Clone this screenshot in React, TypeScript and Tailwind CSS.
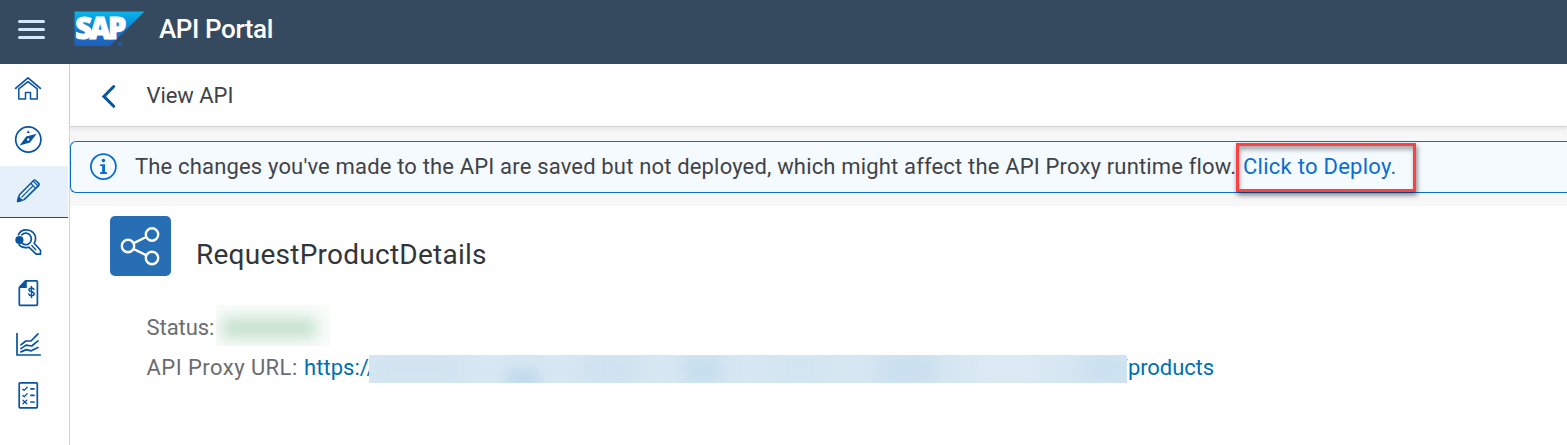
import type { ReactNode } from 'react';

const text = "font-['Roboto',sans-serif] whitespace-pre leading-none";

function Icon({ children }: { children: ReactNode }) {
  return (
    <svg
      width="28"
      height="28"
      viewBox="0 0 28 28"
      fill="none"
      stroke="#0854a0"
      strokeWidth="1.7"
      strokeLinecap="round"
      strokeLinejoin="round"
    >
      {children}
    </svg>
  );
}

function NavItem({ children, active = false }: { children: ReactNode; active?: boolean }) {
  return (
    <a
      className={
        active
          ? 'flex h-[52px] w-[68px] shrink-0 items-start border-b border-[#0854a0] bg-[#e5f0fa] pt-[10px] pl-[14px]'
          : 'flex h-[51px] w-[68px] shrink-0 items-start pt-[10px] pl-[14px]'
      }
    >
      {children}
    </a>
  );
}

function SapLogo() {
  return (
    <svg width="71" height="36" viewBox="0 0 71 36" className="shrink-0 overflow-visible">
      <defs>
        <linearGradient id="sap" x1="0" y1="0" x2="0" y2="1">
          <stop offset="0" stopColor="#08b4ea" />
          <stop offset="0.3" stopColor="#0d94dc" />
          <stop offset="0.65" stopColor="#1870c8" />
          <stop offset="1" stopColor="#1e5fbb" />
        </linearGradient>
      </defs>
      <path d="M0.5 0.5H70.5L36 35H0.5Z" fill="url(#sap)" />
      <text
        x="1.2"
        y="28.3"
        letterSpacing="-2.6"
        textLength="48.5"
        lengthAdjust="spacingAndGlyphs"
        fontFamily="Open Sans"
        fontWeight="800"
        fontSize="29.5"
        fill="#fff"
        stroke="#fff"
        strokeWidth="1"
      >
        SAP
      </text>
      <circle cx="46" cy="32.7" r="2.2" fill="#1f5b9f" />
    </svg>
  );
}

function Sidebar() {
  return (
    <nav className="flex w-[70px] shrink-0 flex-col border-r border-[#d5d5d5] bg-white">
      <NavItem>
        <Icon>
          <path d="M1.6 14.4 14 3.8l12.4 10.6" />
          <path d="M4.8 14.8V24.9H11.5V18.4H16.5V24.9H23.2V14.8L14 7.6Z" strokeWidth="1.5" />
        </Icon>
      </NavItem>
      <NavItem>
        <Icon>
          <circle cx="14.3" cy="14.5" r="12.6" />
          <path d="M5.6 20.4 12.2 11.6 22.7 8.8 16 17.6Z" fill="#0854a0" stroke="none" />
          <circle cx="14.2" cy="14.5" r="1.2" fill="#fff" stroke="none" />
          <path d="M12.5 8 14.2 5.4l1.7 2.6Z" fill="#0854a0" stroke="none" />
        </Icon>
      </NavItem>
      <NavItem active>
        <Icon>
          <path d="M3.6 25.4 5.4 18.8 19.6 4.5q1-1 2 0L24.7 7.4q1 1 0 2L10.2 23.6Z" strokeWidth="1.5" />
          <path d="M16.8 7.4l4.9 4.9M19.2 5.1l4.9 4.9M7.8 21.2 18.9 9.9" strokeWidth="1.2" />
          <path d="M3.6 25.4l1-4 3 3Z" fill="#0854a0" />
        </Icon>
      </NavItem>
      <NavItem>
        <Icon>
          <path d="M4.5 6.6C6 3.2 9 1.8 12.3 1.8c5.5 0 9.3 4.1 9.3 8.8 0 1.8-.5 3.3-1.4 4.7l6.3 7v3.9h-4.3l-7.4-7c-3.8 1.1-7.4.1-9.7-2.5" />
          <path d="M7.8 6.8c2.5-2.4 6.3-2.1 8.3.5s1.5 6.1-.8 8-5.2 1.5-7.2 0" />
          <path d="M17.8 17.6 21.7 21.7" strokeWidth="1.4" />
          <circle cx="5.4" cy="12" r="4.1" fill="#0854a0" stroke="none" />
        </Icon>
      </NavItem>
      <NavItem>
        <Icon>
          <path d="M11.8 1.8H22.5q.9 0 .9.9V25.4q0 .9-.9.9H6.2q-.9 0-.9-.9V8.8Z" />
          <path d="M5 9V7.4L10.8 1.6h2V9Z" fill="#0854a0" stroke="none" />
          <path
            d="M20 10.4c-.5-1.1-1.4-1.5-2.5-1.5-1.5 0-2.5.8-2.5 1.9 0 2.8 5.2 1.3 5.2 4 0 1.2-1.1 2-2.7 2-1.4 0-2.4-.6-2.8-1.8M17.5 7.4v11"
            strokeWidth="1.5"
          />
        </Icon>
      </NavItem>
      <NavItem>
        <Icon>
          <path d="M3 3.8V25H26" strokeLinejoin="miter" strokeLinecap="square" />
          <path d="M6.9 14.8 11.8 11H17L24 3.8M6.9 18.6 12.2 15.1 17.7 16 24 10.8M6.9 21.9 12.2 19.6 17.2 20.8 24 17.4" />
        </Icon>
      </NavItem>
      <NavItem>
        <Icon>
          <rect x="5.2" y="1.8" width="18.1" height="25" rx="0.8" />
          <path
            d="M8.8 8.2l1.4 1.2 3-3.1M8.8 14.5l1.4 1.2 3-3.1M9 19.2l3.8 3.5M12.8 19.2l-3.8 3.5"
            strokeWidth="1.3"
          />
          <path d="M16.9 7.8h3.1M16.9 14.3h3.1M16.9 21h3.1" />
        </Icon>
      </NavItem>
    </nav>
  );
}

export default function App() {
  return (
    <div className="flex h-[445px] w-full flex-col overflow-hidden bg-white">
      <header className="flex h-16 shrink-0 items-start bg-[#354a5f]">
        <div className="mt-5 ml-[18px] flex w-[27px] flex-col gap-[5px]">
          <span className="h-[3px] rounded-full bg-[#d1e8ff]" />
          <span className="h-[3px] rounded-full bg-[#d1e8ff]" />
          <span className="h-[3px] rounded-full bg-[#d1e8ff]" />
        </div>
        <div className="mt-[11px] ml-[29px]">
          <SapLogo />
        </div>
        <h1 className={`${text} mt-[16px] ml-[14px] text-[26px] font-medium tracking-[-0.4px] text-white`}>API Portal</h1>
      </header>

      <div className="flex min-h-0 flex-1">
        <Sidebar />
        <main className="flex min-w-0 flex-1 flex-col">
          <div className="z-10 flex h-[63px] shrink-0 items-start border-b border-[#d4d4d4] bg-white shadow-[0_2px_4px_rgba(0,0,0,0.08)]">
            <svg
              width="16"
              height="25"
              viewBox="0 0 16 25"
              fill="none"
              stroke="#0854a0"
              strokeWidth="3"
              strokeLinecap="round"
              className="mt-5 ml-[31px]"
            >
              <path d="M12.7 2.5 2.9 12.4 12.7 22.3" strokeLinejoin="miter" />
            </svg>
            <h2 className={`${text} mt-[21px] ml-[29.5px] text-[22px] tracking-[-0.05px] text-[#3f4347]`}>View API</h2>
          </div>

          <div className="flex h-[79px] shrink-0 flex-col bg-[#f7f7f7] pt-[14px]">
            <div className="flex h-[52px] items-start rounded-l-md border border-r-0 border-[#0a6ed1] bg-[#f5faff]">
              <svg width="28" height="28" viewBox="0 0 28 28" fill="none" className="mt-[11px] ml-[18px] shrink-0">
                <circle cx="14.4" cy="13.6" r="12.5" stroke="#0a6ed1" strokeWidth="1.8" />
                <circle cx="14.4" cy="7.6" r="1.8" fill="#0a6ed1" />
                <path d="M11.2 11.2H16V19H17.8V20.9H11.2V19H13.1V13H11.2Z" fill="#0a6ed1" />
              </svg>
              <p className={`${text} mt-[14px] ml-[18px] w-[1101px] shrink-0 text-[22px] tracking-[0.168px] text-[#3f4347]`}>
                The changes you've made to the API are saved but not deployed, which might affect the API Proxy runtime flow.
              </p>
              <div className="mt-[1px] h-[49px] w-[180px] shrink-0 border-[3px] border-[#fb4141] pt-[10px] pl-[4px] shadow-[1px_3px_5px_rgba(0,0,0,0.5),inset_1px_4px_4px_rgba(0,0,0,0.3)]">
                <a className={`${text} text-[22px] tracking-[0.26px] text-[#0a6ed1]`}>Click to Deploy.</a>
              </div>
            </div>
          </div>

          <section className="flex flex-col">
            <div className="flex items-start pt-[10px] pl-10">
              <div className="h-[60px] w-[61px] shrink-0 rounded-[5px] bg-[#286eb4]">
                <svg width="61" height="60" viewBox="0 0 61 60" fill="none" stroke="#fff" strokeWidth="2.4">
                  <circle cx="18" cy="30" r="6.2" />
                  <circle cx="42" cy="18.5" r="6.2" />
                  <circle cx="42" cy="42" r="6.2" />
                  <path d="M23.7 27.2 36.2 21M23.5 33 36.5 39.3" />
                </svg>
              </div>
              <h3 className={`${text} mt-[25px] ml-[25px] text-[28px] tracking-[0.25px] text-[#32363a]`}>
                RequestProductDetails
              </h3>
            </div>
            <div className="mt-[29px] flex h-[41px] items-start pl-[76.5px]">
              <span className={`${text} mt-[12px] w-[69.5px] text-[22px] tracking-[-0.05px] text-[#6a6d70]`}>Status:</span>
              <div className="flex h-[41px] w-[114px] items-center justify-center overflow-hidden bg-[#f9fcfa]">
                <div className="mt-1 -ml-2 h-[22px] w-[94px] bg-[#c9e3d0] blur-[7px]" />
              </div>
            </div>
            <div className="mt-[9px] flex h-[28px] items-start pl-[76.5px]">
              <span className={`${text} mt-[2px] w-[157.5px] text-[22px] tracking-[0.45px] text-[#6a6d70]`}>
                API Proxy URL:
              </span>
              <a className={`${text} mt-[2px] w-[65px] text-[22px] tracking-[0.05px] text-[#0070b1]`}>https://</a>
              <div className="z-10 flex h-[28px] w-[758px] items-center gap-[42px] overflow-hidden bg-[#d8e8f2]">
                <div className="h-[36px] w-[96px] shrink-0 bg-[#d1e4f1] blur-[10px]" />
                <div className="mt-5 h-[18px] w-[32px] shrink-0 bg-[#b9d6eb] blur-[8px]" />
                <div className="h-[30px] w-[60px] shrink-0 bg-[#cce1ef] blur-[11px]" />
                <div className="h-[30px] w-[40px] shrink-0 bg-[#c4ddee] blur-[10px]" />
                <div className="h-[36px] w-[70px] shrink-0 bg-[#d1e5f0] blur-[11px]" />
                <div className="h-[34px] w-[60px] shrink-0 bg-[#c8deee] blur-[11px]" />
                <div className="h-[36px] w-[60px] shrink-0 bg-[#dceaf3] blur-[11px]" />
                <div className="h-[30px] w-[50px] shrink-0 bg-[#c8deef] blur-[11px]" />
              </div>
              <a className={`${text} mt-[2px] -ml-[8px] text-[22px] tracking-[-0.1px] text-[#0070b1]`}>/products</a>
            </div>
          </section>
        </main>
      </div>
    </div>
  );
}
